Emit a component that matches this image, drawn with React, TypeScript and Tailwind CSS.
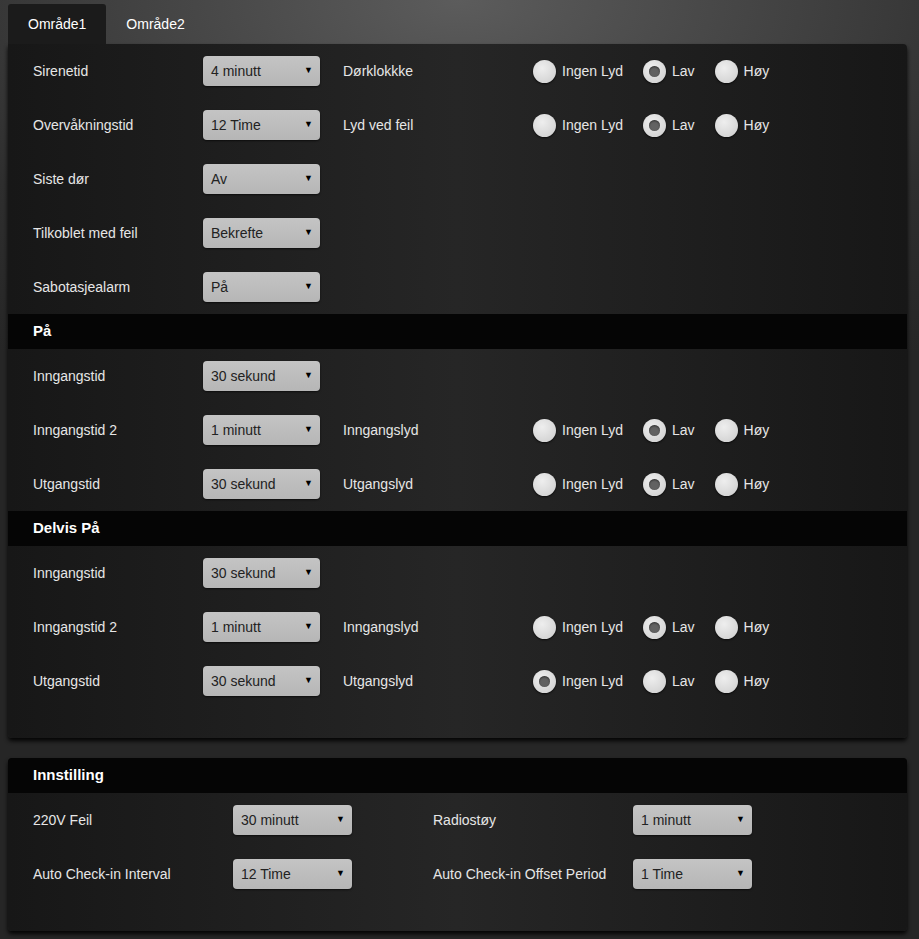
type Opt = { label: string; value: string; sound?: string; checked?: number };

const levels = ["Ingen Lyd", "Lav", "Høy"];

function Dropdown({ value, wide }: { value: string; wide?: boolean }) {
  return (
    <div
      className={`${wide ? "w-[119px]" : "w-[117px]"} h-[30px] rounded-[4px] bg-[linear-gradient(#c4c4c4,#b6b6b6)] shadow-[0_1px_2px_rgba(0,0,0,0.6)] flex items-center justify-between pl-2 pr-[7px] text-[14px] text-[#222]`}
    >
      <span>{value}</span>
      <span className="text-[9px] text-black">▼</span>
    </div>
  );
}

function Radio({ on }: { on: boolean }) {
  return (
    <span className="w-[23px] h-[23px] rounded-full bg-[radial-gradient(circle_at_40%_35%,#eeeeee,#cccccc)] shadow-[0_1px_2px_rgba(0,0,0,0.7)] flex items-center justify-center">
      {on && <span className="w-[11px] h-[11px] rounded-full bg-[#626262] shadow-[inset_0_1px_2px_rgba(0,0,0,0.5)]" />}
    </span>
  );
}

function SoundChoice({ checked }: { checked: number }) {
  return (
    <div className="flex items-center">
      {levels.map((l, i) => (
        <div key={l} className={`flex items-center gap-[6px] ${i < 2 ? "mr-5" : ""}`}>
          <Radio on={checked === i} />
          <span>{l}</span>
        </div>
      ))}
    </div>
  );
}

function Row({ label, value, sound, checked }: Opt) {
  return (
    <div className="h-[54px] flex items-center pl-[25px]">
      <div className="w-[170px]">{label}</div>
      <Dropdown value={value} />
      {sound && (
        <>
          <div className="w-[190px] ml-[23px]">{sound}</div>
          <SoundChoice checked={checked ?? 0} />
        </>
      )}
    </div>
  );
}

function Header({ title, top }: { title: string; top?: boolean }) {
  return (
    <div className={`h-[35px] bg-[#050505] flex items-center pl-[25px] font-bold text-[15px] text-white ${top ? "rounded-t-[4px]" : ""}`}>
      {title}
    </div>
  );
}

const general: Opt[] = [
  { label: "Sirenetid", value: "4 minutt", sound: "Dørklokkke", checked: 1 },
  { label: "Overvåkningstid", value: "12 Time", sound: "Lyd ved feil", checked: 1 },
  { label: "Siste dør", value: "Av" },
  { label: "Tilkoblet med feil", value: "Bekrefte" },
  { label: "Sabotasjealarm", value: "På" },
];

const on: Opt[] = [
  { label: "Inngangstid", value: "30 sekund" },
  { label: "Inngangstid 2", value: "1 minutt", sound: "Inngangslyd", checked: 1 },
  { label: "Utgangstid", value: "30 sekund", sound: "Utgangslyd", checked: 1 },
];

const partly: Opt[] = [
  { label: "Inngangstid", value: "30 sekund" },
  { label: "Inngangstid 2", value: "1 minutt", sound: "Inngangslyd", checked: 1 },
  { label: "Utgangstid", value: "30 sekund", sound: "Utgangslyd", checked: 0 },
];

const panel =
  "bg-[linear-gradient(to_right,#171717,#262626_50%,#171717)] shadow-[0_3px_4px_rgba(0,0,0,0.9)] rounded-[4px]";

export default function App() {
  return (
    <div className="min-h-[939px] bg-[radial-gradient(ellipse_90%_45%_at_50%_0%,#5c5c5c,#2e2e2e_70%,#262626)] font-['Liberation_Sans',Arial,sans-serif] text-[14px] text-[#e6e6e6] pl-2 pr-3 pt-1 pb-2">
      <div className="flex h-10 items-center">
        <div className="h-10 px-5 flex items-center bg-[#1b1b1b] rounded-t-[3px] text-white">Område1</div>
        <div className="h-10 px-5 flex items-center text-white">Område2</div>
      </div>

      <div className={`${panel} rounded-tl-none pb-[30px]`}>
        {general.map((r) => (
          <Row key={r.label} {...r} />
        ))}
        <Header title="På" />
        {on.map((r) => (
          <Row key={r.label} {...r} />
        ))}
        <Header title="Delvis På" />
        {partly.map((r) => (
          <Row key={r.label} {...r} />
        ))}
      </div>

      <div className={`${panel} mt-5 pb-[30px]`}>
        <Header title="Innstilling" top />
        <div className="h-[54px] flex items-center pl-[25px]">
          <div className="w-[200px]">220V Feil</div>
          <Dropdown value="30 minutt" wide />
          <div className="w-[200px] ml-[81px]">Radiostøy</div>
          <Dropdown value="1 minutt" wide />
        </div>
        <div className="h-[54px] flex items-center pl-[25px]">
          <div className="w-[200px]">Auto Check-in Interval</div>
          <Dropdown value="12 Time" wide />
          <div className="w-[200px] ml-[81px]">Auto Check-in Offset Period</div>
          <Dropdown value="1 Time" wide />
        </div>
      </div>
    </div>
  );
}
